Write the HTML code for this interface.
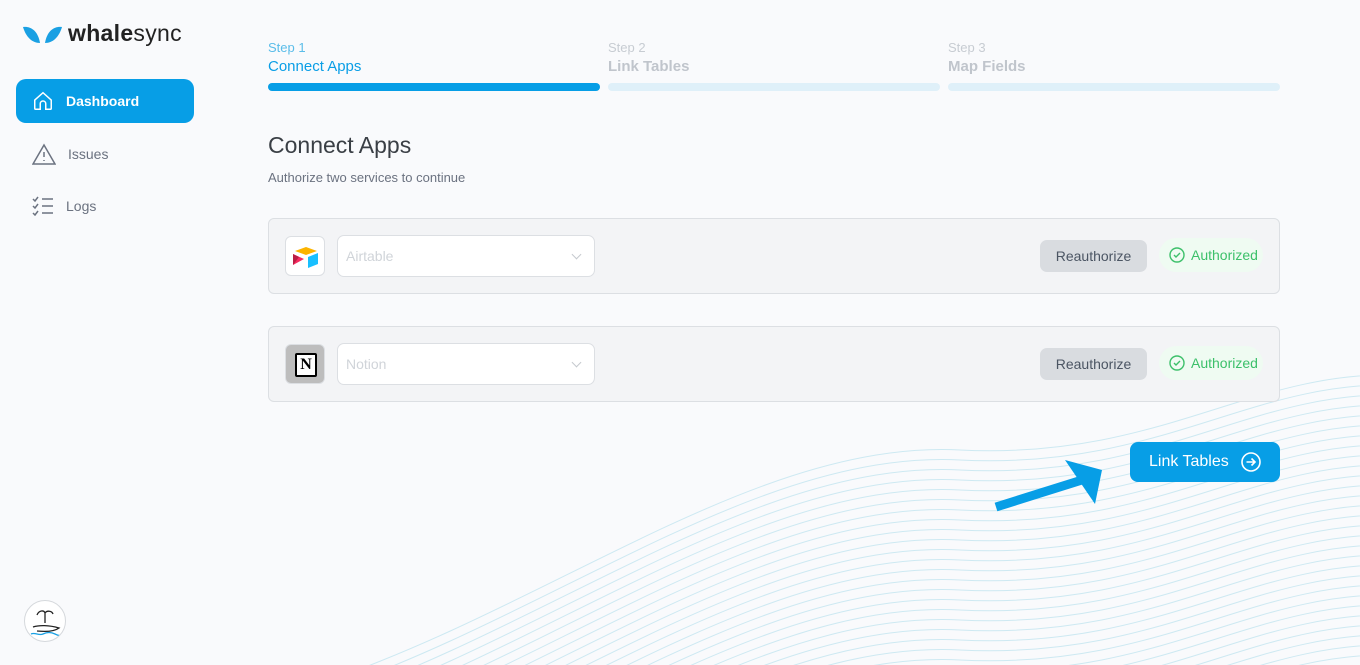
<!DOCTYPE html>
<html><head><meta charset="utf-8"><style>
*{margin:0;padding:0;box-sizing:border-box}
html,body{width:1360px;height:665px;overflow:hidden}
body{background:#f9fafc;font-family:"Liberation Sans",sans-serif;position:relative}
.abs{position:absolute;display:block}
.nav{position:absolute;left:16px;width:178px;height:44px;border-radius:10px;display:flex;align-items:center;font-size:14px;color:#6b7280}
.nav svg{margin-left:16px;margin-right:12px}
.step{position:absolute;top:40px;width:332px}
.step .s{font-size:13px;color:#c7ccd2}
.step .t{font-size:15px;color:#c0c5cc;margin-top:3px;font-weight:bold}
.step .bar{height:8px;border-radius:4px;background:#dff0f9;margin-top:8px}
.card{position:absolute;left:268px;width:1012px;height:76px;background:#f3f4f6;border:1px solid #dcdfe3;border-radius:6px}
.logo{position:absolute;left:16px;top:17px;width:40px;height:40px;border-radius:6px;border:1px solid #dcdfe3;background:#fff}
.sel{position:absolute;left:68px;top:16px;width:258px;height:42px;border-radius:7px;border:1px solid #dcdfe3;background:#fff;font-size:14px;color:#d0d4d9;padding:12px 8px}
.sel:after{content:"";position:absolute;right:14px;top:15px;width:6px;height:6px;border-right:1px solid #c5c9ce;border-bottom:1px solid #c5c9ce;transform:rotate(45deg)}
.re{position:absolute;left:771px;top:21px;width:107px;height:32px;border-radius:7px;background:#d9dce0;color:#4b5563;font-size:14px;text-align:center;line-height:32px}
.au{position:absolute;left:890px;top:19px;width:104px;height:34px;border-radius:17px;background:#effbf2;color:#3cc06a;font-size:14px;line-height:34px;padding-left:10px;display:flex;align-items:center;gap:6px}
</style></head><body>
<svg class="abs" style="left:0;top:0" width="1360" height="665">
<g fill="none" stroke="#cde9f2" stroke-width="1">
<path id="w" d="M330 680 C 560 600, 760 440, 960 450 S 1250 370, 1400 375"/>
<use href="#w" y="10"/><use href="#w" y="20"/><use href="#w" y="30"/><use href="#w" y="40"/><use href="#w" y="50"/><use href="#w" y="60"/><use href="#w" y="70"/><use href="#w" y="80"/><use href="#w" y="90"/><use href="#w" y="100"/><use href="#w" y="110"/><use href="#w" y="120"/><use href="#w" y="130"/><use href="#w" y="140"/><use href="#w" y="150"/><use href="#w" y="160"/><use href="#w" y="170"/><use href="#w" y="180"/><use href="#w" y="190"/><use href="#w" y="200"/><use href="#w" y="210"/><use href="#w" y="220"/><use href="#w" y="230"/><use href="#w" y="240"/><use href="#w" y="250"/><use href="#w" y="260"/><use href="#w" y="270"/><use href="#w" y="280"/>
</g></svg>

<svg class="abs" style="left:23px;top:25px" width="40" height="20" viewBox="0 0 40 20"><path d="M0 2 C8 1 15 6 17 18 C9 18 3 12 0 2Z" fill="#1aa0e3"/><path d="M39 2 C31 1 24 6 22 18 C30 18 36 12 39 2Z" fill="#1aa0e3"/></svg>
<div class="abs" style="left:68px;top:20px;font-size:23px;color:#222;letter-spacing:0.3px"><b>whale</b>sync</div>

<div class="nav" style="top:79px;background:#079ee6;color:#fff;font-weight:bold"><svg width="22" height="22" viewBox="0 0 24 24" fill="none" stroke="#fff" stroke-width="1.6"><path d="M3 11 L12 3 L21 11 V20 a1 1 0 0 1-1 1 H15 V15 a3 3 0 0 0-6 0 V21 H4 a1 1 0 0 1-1-1Z"/></svg>Dashboard</div>
<div class="nav" style="top:132px"><svg width="24" height="22" viewBox="0 0 24 22" fill="none" stroke="#6b7280" stroke-width="1.5"><path d="M12 2 L23 21 H1Z"/><path d="M12 9 V14 M12 17 V18"/></svg>Issues</div>
<div class="nav" style="top:184px"><svg width="22" height="20" viewBox="0 0 22 20" fill="none" stroke="#6b7280" stroke-width="1.5"><path d="M1 3 l2 2 3-4 M1 10 l2 2 3-4 M1 17 l2 2 3-4 M10 3 H21 M10 10 H21 M10 17 H21"/></svg>Logs</div>

<div class="abs" style="left:24px;top:600px;width:42px;height:42px;border-radius:50%;border:1px solid #d5d8dc;background:#fff;overflow:hidden"><svg width="42" height="42" viewBox="0 0 42 42" fill="none" stroke="#222" stroke-width="1.3"><path d="M12 14 C14 9 19 9 20 12 M20 12 C22 9 27 10 28 13 M20 12 V22"/><path d="M8 26 C14 24 24 24 34 27 C30 30 22 31 12 30" /><path d="M6 33 C10 31 14 35 18 33 S26 31 30 33 S36 35 38 33" stroke="#1aa0e3"/></svg></div>

<div class="step" style="left:268px"><div class="s" style="color:#5bbde9">Step 1</div><div class="t" style="color:#0a9ee6;font-weight:normal">Connect Apps</div><div class="bar" style="background:#079ee6"></div></div>
<div class="step" style="left:608px"><div class="s">Step 2</div><div class="t">Link Tables</div><div class="bar"></div></div>
<div class="step" style="left:948px"><div class="s">Step 3</div><div class="t">Map Fields</div><div class="bar"></div></div>

<div class="abs" style="left:268px;top:132px;font-size:23px;color:#3a3f45">Connect Apps</div>
<div class="abs" style="left:268px;top:170px;font-size:13px;color:#6b7280">Authorize two services to continue</div>

<div class="card" style="top:218px">
<div class="logo"><svg width="40" height="40" viewBox="0 0 40 40"><path d="M20 10 L31 14 L20 18 L9 14Z" fill="#fcb400"/><path d="M22 20 L32 16 V27 L22 31Z" fill="#18bfff"/><path d="M7 17 L18 22 L7 28Z" fill="#f82b60"/><path d="M7 17 L13 20 L7 28Z" fill="#ba1e45"/></svg></div>
<div class="sel">Airtable</div>
<div class="re">Reauthorize</div>
<div class="au"><svg width="16" height="16" viewBox="0 0 16 16" fill="none" stroke="#3cc06a" stroke-width="1.4"><circle cx="8" cy="8" r="7"/><path d="M5 8 l2 2 4-4"/></svg>Authorized</div>
</div>
<div class="card" style="top:326px">
<div class="logo" style="background:#bdbdbd"><div style="position:absolute;left:9px;top:8px;width:22px;height:24px;background:#fff;border:2px solid #000;border-radius:2px;font:bold 16px 'Liberation Serif',serif;text-align:center;line-height:20px;color:#000">N</div></div>
<div class="sel">Notion</div>
<div class="re">Reauthorize</div>
<div class="au"><svg width="16" height="16" viewBox="0 0 16 16" fill="none" stroke="#3cc06a" stroke-width="1.4"><circle cx="8" cy="8" r="7"/><path d="M5 8 l2 2 4-4"/></svg>Authorized</div>
</div>

<svg class="abs" style="left:990px;top:450px" width="130" height="65" viewBox="0 0 130 65"><path d="M6 57 L92 30" stroke="#079ee6" stroke-width="9"/><path d="M112 20 L75 10 L105 54Z" fill="#079ee6"/></svg>
<div class="abs" style="left:1130px;top:442px;width:150px;height:40px;border-radius:8px;background:#079ee6;color:#fff;font-size:16px;display:flex;align-items:center;padding-left:19px;gap:12px">Link Tables<svg width="20" height="20" viewBox="0 0 20 20" fill="none" stroke="#fff" stroke-width="1.6"><circle cx="10" cy="10" r="9"/><path d="M5.5 10 H14 M10.5 6.5 L14 10 L10.5 13.5"/></svg></div>
</body></html>
